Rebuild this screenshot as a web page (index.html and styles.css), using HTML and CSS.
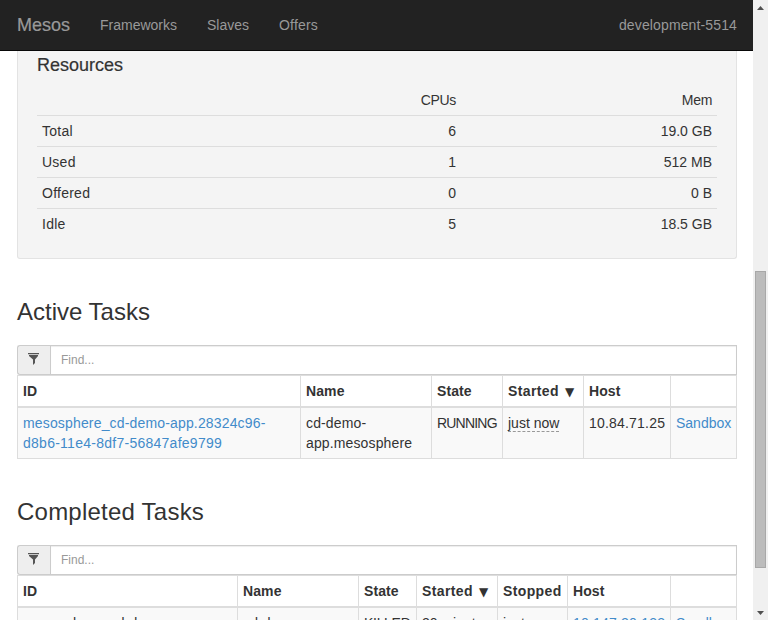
FILE: index.html
```
<!DOCTYPE html>
<html lang="en">
<head>
<meta charset="utf-8">
<title>Mesos</title>
<link rel="stylesheet" href="styles.css">
</head>
<body>
<div class="window">
  <div class="page">
    <nav class="navbar">
      <a class="brand"><span>Mesos</span></a>
      <a class="nav-frameworks"><span>Frameworks</span></a>
      <a class="nav-slaves"><span>Slaves</span></a>
      <a class="nav-offers"><span>Offers</span></a>
      <a class="cluster"><span>development-5514</span></a>
    </nav>
    <main>
      <section class="well">
        <h4>Resources</h4>
        <table class="resources">
          <colgroup><col class="r1"><col class="r2"><col class="r3"></colgroup>
          <tr><td></td><td class="cpus">CPUs</td><td class="mem">Mem</td></tr>
          <tr><td>Total</td><td>6</td><td>19.0 GB</td></tr>
          <tr><td>Used</td><td>1</td><td>512 MB</td></tr>
          <tr><td>Offered</td><td>0</td><td>0 B</td></tr>
          <tr><td>Idle</td><td>5</td><td>18.5 GB</td></tr>
        </table>
      </section>

      <h2 class="t-active">Active Tasks</h2>
      <div class="filter">
        <span class="addon"><svg width="11" height="12" viewBox="0 0 11 12"><path d="M0 0h11v1.300H0zM1 2h9v1L7 6.500V10L5 12V6.500L1 3z"/></svg></span>
        <div class="input">Find...</div>
      </div>
      <table class="tasks">
        <colgroup><col class="a1"><col class="a2"><col class="a3"><col class="a4"><col class="a5"><col class="a6"></colgroup>
        <tr><th>ID</th><th>Name</th><th>State</th><th><span class="started">Started</span><i class="arrow">▼</i></th><th>Host</th><th></th></tr>
        <tr><td><a class="id">mesosphere_cd-demo-app.28324c96-<br><span class="hash">d8b6-11e4-8df7-56847afe9799</span></a></td><td><span class="name">cd-demo-<br>app.mesosphere</span></td><td><span class="running">RUNNING</span></td><td><abbr>just now</abbr></td><td><span class="host">10.84.71.25</span></td><td><a class="sandbox">Sandbox</a></td></tr>
      </table>

      <h2 class="t-completed">Completed Tasks</h2>
      <div class="filter">
        <span class="addon"><svg width="11" height="12" viewBox="0 0 11 12"><path d="M0 0h11v1.300H0zM1 2h9v1L7 6.500V10L5 12V6.500L1 3z"/></svg></span>
        <div class="input">Find...</div>
      </div>
      <table class="tasks">
        <colgroup><col class="c1"><col class="c2"><col class="c3"><col class="c4"><col class="c5"><col class="c6"><col class="a6"></colgroup>
        <tr><th>ID</th><th>Name</th><th>State</th><th><span class="started">Started</span><i class="arrow">▼</i></th><th><span class="started">Stopped</span></th><th>Host</th><th></th></tr>
        <tr><td><span class="id">mesosphere_cd-demo-</span></td><td><span class="name">cd-demo-</span></td><td><span class="killed">KILLED</span></td><td><abbr>20 minutes</abbr></td><td><abbr>just now</abbr></td><td><a class="host">10.147.20.133</a></td><td><a class="sandbox">Sandbox</a></td></tr>
      </table>
    </main>
  </div>
  <div class="scrollbar">
    <i class="up"></i>
    <i class="thumb"></i>
    <i class="down"></i>
  </div>
</div>
</body>
</html>
```
FILE: styles.css
```
* { box-sizing: border-box; }
body {
  margin: 0;
  overflow: hidden;
  background: #fff;
  color: #333;
  font: 14px/20px "Liberation Sans", Arial, sans-serif;
  letter-spacing: 0;
}
.window { display: flex; width: 768px; height: 620px; overflow: hidden; }
.page { width: 753px; height: 620px; overflow: hidden; }

.navbar {
  display: flex;
  align-items: center;
  height: 51px;
  padding: 0 16px 0 17px;
  background: #222;
  border-bottom: 1px solid #080808;
  color: #999;
}
.navbar a { white-space: nowrap; }
.navbar .brand { width: 83px; font-size: 18px; letter-spacing: 0; -webkit-text-stroke: 0.2px #999; }
.nav-frameworks { width: 107px; }
.nav-slaves { width: 72px; }
.nav-offers { letter-spacing: 0.2px; }
.navbar .cluster { margin-left: auto; letter-spacing: 0.13px; }

main { padding: 0 16px 0 17px; }
.well {
  height: 208px;
  padding: 4px 19px 0;
  background: #f4f4f4;
  border: 1px solid #e3e3e3;
  border-top: 0;
  border-radius: 0 0 3px 3px;
}
h4 {
  margin: 0 0 10px;
  font-size: 18px;
  font-weight: 400;
  line-height: 20px;
  letter-spacing: 0;
  -webkit-text-stroke: 0.2px #333;
}
table { width: 100%; table-layout: fixed; border-collapse: separate; border-spacing: 0; }
th, td { padding: 5px; text-align: left; vertical-align: top; white-space: nowrap; }
.resources td:first-child { letter-spacing: 0.25px; }
.resources tr + tr td { border-top: 1px solid #ddd; }
.resources td + td { text-align: right; }
.cpus, .mem { letter-spacing: -0.3px; }
.r1 { width: 212px; }
.r2 { width: 212px; }
.r3 { width: 256px; }

h2 { margin: 40px 0 20px; font-size: 24px; font-weight: 400; line-height: 26px; letter-spacing: 0; }
.t-completed { letter-spacing: 0.23px; }
.filter { display: flex; height: 30px; }
.addon {
  display: flex;
  align-items: flex-start;
  width: 33px;
  padding: 7px 0 0 10px;
  background: #eee;
  border: 1px solid #ccc;
  border-right: 0;
  border-radius: 3px 0 0 3px;
}
.addon svg { display: block; fill: #555; }
.input {
  flex: 1;
  padding: 4px 10px;
  border: 1px solid #ccc;
  box-shadow: inset 0 1px 1px rgba(0, 0, 0, .075);
  color: #999;
  font-size: 12px;
  letter-spacing: 0;
}
.tasks th, .tasks td { border-left: 1px solid #ddd; }
.tasks th:last-child, .tasks td:last-child { border-right: 1px solid #ddd; }
.tasks th { border-top: 1px solid #ddd; border-bottom: 2px solid #ddd; }
.tasks td { background: #f9f9f9; border-bottom: 1px solid #ddd; }
.tasks a { color: #428bca; }
.a1 { width: 283px; }
.a2 { width: 131px; }
.a3 { width: 71px; }
.a4 { width: 81px; }
.a5 { width: 87px; }
.a6 { width: 67px; }
.c1 { width: 220px; }
.c2 { width: 121px; }
.c3 { width: 58px; }
.c4 { width: 81px; }
.c5 { width: 70px; }
.c6 { width: 103px; }
th { letter-spacing: 0.1px; }
.id { letter-spacing: 0.16px; }
.hash { letter-spacing: 0.26px; }
.name { letter-spacing: 0.13px; }
.running { letter-spacing: -0.8px; }
.killed { letter-spacing: -0.3px; }
.host { letter-spacing: 0.2px; }
.started { letter-spacing: 0.38px; }
.arrow { margin-left: 6px; font: 12px/1 "DejaVu Sans", sans-serif; }
abbr { border-bottom: 1px dashed #999; }

.scrollbar {
  display: flex;
  flex-direction: column;
  align-items: center;
  width: 15px;
  height: 620px;
  background: #f0f0f0;
}
.up, .down { width: 7px; height: 4px; background: #505050; }
.up { margin-top: 6px; clip-path: polygon(50% 0, 100% 100%, 0 100%); }
.down { margin-top: 43px; clip-path: polygon(0 0, 100% 0, 50% 100%); }
.thumb { width: 11px; height: 297px; margin-top: 261px; background: #bcbcbc; border: 1px solid #a8a8a8; }
```
